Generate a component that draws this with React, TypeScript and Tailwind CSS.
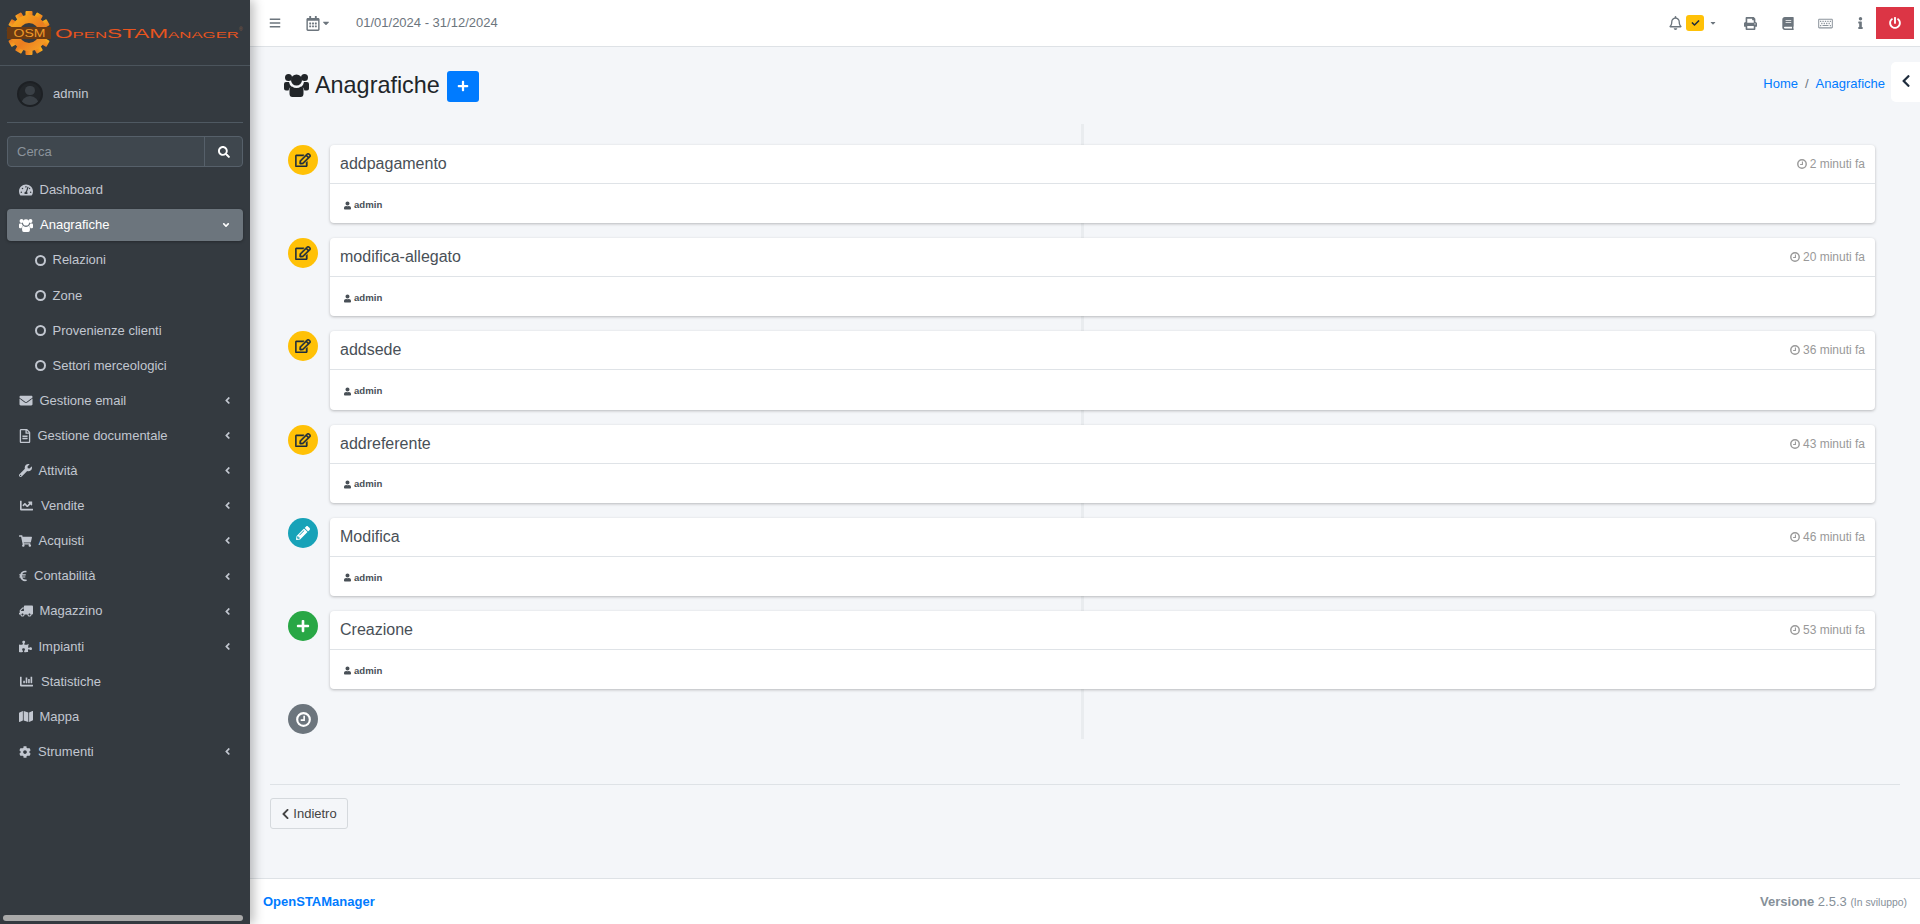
import type { ReactNode } from 'react';
import {
  FaAngleDown,
  FaAngleLeft,
  FaBars,
  FaBook,
  FaCaretDown,
  FaChartBar,
  FaChartLine,
  FaCheck,
  FaChevronLeft,
  FaCog,
  FaEnvelope,
  FaEuroSign,
  FaInfo,
  FaMap,
  FaPencilAlt,
  FaPlus,
  FaPowerOff,
  FaPrint,
  FaPuzzlePiece,
  FaRegBell,
  FaRegCalendarAlt,
  FaRegEdit,
  FaRegFileAlt,
  FaRegKeyboard,
  FaSearch,
  FaShoppingCart,
  FaTachometerAlt,
  FaTruck,
  FaUser,
  FaWrench,
} from 'react-icons/fa';

// Font Awesome 4 look: the "users" glyph is taller than the one in the package
function UsersIcon({ className }: { className: string }) {
  return (
    <svg viewBox="0 0 25 23" fill="currentColor" className={className}>
      <circle cx="4.5" cy="3.5" r="3.5" />
      <circle cx="20.5" cy="3.5" r="3.5" />
      <circle cx="12.5" cy="6" r="5.5" />
      <path d="M0 10q0-2 2-2h3q.5 3 2.5 4.5q-2.5 1-3 4H2q-2 0-2-2z" />
      <path d="M25 10q0-2-2-2h-3q-.5 3-2.5 4.5q2.5 1 3 4H23q2 0 2-2z" />
      <path d="M8 12.5q2 1.5 4.5 1.5t4.5-1.5q2.5 0 2.5 3v4q0 3.5-3 3.5H8.5q-3 0-3-3.5v-4q0-3 2.5-3z" />
    </svg>
  );
}

function ClockIcon({ className }: { className: string }) {
  return (
    <svg viewBox="0 0 14 14" fill="none" stroke="currentColor" className={className}>
      <circle cx="7" cy="7" r="5.9" strokeWidth="2" />
      <path d="M7.6 3.5v4.1H4.4" strokeWidth="1.5" />
    </svg>
  );
}

interface NavItem {
  label: string;
  icon: ReactNode;
  slot: string;
  arrow?: boolean;
}

const navBefore: NavItem[] = [
  { label: 'Dashboard', icon: <FaTachometerAlt className="w-[14px] h-[14px]" />, slot: 'w-[20.5px]' },
];

const subItems = ['Relazioni', 'Zone', 'Provenienze clienti', 'Settori merceologici'];

const navAfter: NavItem[] = [
  { label: 'Gestione email', icon: <FaEnvelope className="w-[14px] h-[13px]" />, slot: 'w-[20.5px]', arrow: true },
  { label: 'Gestione documentale', icon: <FaRegFileAlt className="w-[12px] h-[14px]" />, slot: 'w-[18.5px]', arrow: true },
  { label: 'Attività', icon: <FaWrench className="w-[13px] h-[13px]" />, slot: 'w-[19.5px]', arrow: true },
  { label: 'Vendite', icon: <FaChartLine className="w-[15px] h-[13px]" />, slot: 'w-[22px]', arrow: true },
  { label: 'Acquisti', icon: <FaShoppingCart className="w-[13px] h-[12px]" />, slot: 'w-[19.5px]', arrow: true },
  { label: 'Contabilità', icon: <FaEuroSign className="w-[8px] h-[12px]" />, slot: 'w-[15px]', arrow: true },
  { label: 'Magazzino', icon: <FaTruck className="w-[14px] h-[12px] -scale-x-100" />, slot: 'w-[20.5px]', arrow: true },
  { label: 'Impianti', icon: <FaPuzzlePiece className="w-[13px] h-[13px]" />, slot: 'w-[19.5px]', arrow: true },
  { label: 'Statistiche', icon: <FaChartBar className="w-[15px] h-[13px]" />, slot: 'w-[22px]' },
  { label: 'Mappa', icon: <FaMap className="w-[14px] h-[13px]" />, slot: 'w-[20.5px]' },
  { label: 'Strumenti', icon: <FaCog className="w-[12px] h-[12px]" />, slot: 'w-[19px]', arrow: true },
];

interface TimelineItem {
  title: string;
  time: string;
  color: string;
  icon: ReactNode;
}

const editIcon = <FaRegEdit className="w-[16px] h-[14px]" stroke="currentColor" strokeWidth={16} />;

const timeline: TimelineItem[] = [
  { title: 'addpagamento', time: '2 minuti fa', color: 'bg-[#ffc107] text-[#1f2d3d]', icon: editIcon },
  { title: 'modifica-allegato', time: '20 minuti fa', color: 'bg-[#ffc107] text-[#1f2d3d]', icon: editIcon },
  { title: 'addsede', time: '36 minuti fa', color: 'bg-[#ffc107] text-[#1f2d3d]', icon: editIcon },
  { title: 'addreferente', time: '43 minuti fa', color: 'bg-[#ffc107] text-[#1f2d3d]', icon: editIcon },
  { title: 'Modifica', time: '46 minuti fa', color: 'bg-[#17a2b8] text-white', icon: <FaPencilAlt className="w-[14px] h-[14px]" /> },
  { title: 'Creazione', time: '53 minuti fa', color: 'bg-[#28a745] text-white', icon: <FaPlus className="w-[14px] h-[14px]" /> },
];

function Logo() {
  return (
    <svg width="244" height="60" viewBox="0 0 244 60" className="block">
      <defs>
        <linearGradient id="gear" x1="0" y1="0" x2="1" y2="1">
          <stop offset="0" stopColor="#f9b31c" />
          <stop offset="0.55" stopColor="#ec7d1f" />
          <stop offset="1" stopColor="#f7a927" />
        </linearGradient>
      </defs>
      <g transform="translate(29 33)">
        {[0, 30, 60, 90, 120, 150].map((a) => (
          <rect key={a} x="-3.5" y="-22" width="7" height="44" rx="1" fill="url(#gear)" transform={`rotate(${a})`} />
        ))}
        <circle r="18" fill="url(#gear)" />
        <circle r="10" fill="#343a40" />
        <rect x="-22" y="-6" width="44" height="12" fill="#6b3a12" />
      </g>
      <text x="13.5" y="37" fontFamily="Liberation Sans" fontSize="11" textLength="32" lengthAdjust="spacingAndGlyphs" fill="#f09a2a">
        OSM
      </text>
      <text x="55" y="37.5" fontFamily="Liberation Sans" fontSize="12.5" textLength="184" lengthAdjust="spacingAndGlyphs" fill="#e8541e">
        O<tspan fontSize="9.3">PEN</tspan>STAM<tspan fontSize="9.3">ANAGER</tspan>
      </text>
      <text x="239" y="31" fontFamily="Liberation Sans" fontSize="5" fill="#8a5a44">®</text>
    </svg>
  );
}

function NavRow({ item }: { item: NavItem }) {
  return (
    <div className="h-[32.1px] flex items-center pl-[12px] pr-[12px] text-[#c2c7d0]">
      <span className={`${item.slot} shrink-0 flex items-center`}>{item.icon}</span>
      <span>{item.label}</span>
      {item.arrow && <FaAngleLeft className="ml-auto w-[7px] h-[11px]" />}
    </div>
  );
}

function Sidebar() {
  return (
    <aside className="relative w-[250px] h-full shrink-0 bg-[#343a40] shadow-[4px_0_10px_rgba(0,0,0,0.25)] z-10">
      <div className="h-[66px] border-b border-[#4b545c] overflow-hidden">
        <Logo />
      </div>
      <div className="mx-[7px] h-[57px] border-b border-[#4f5962] flex items-center pl-[10px]">
        <div className="w-[26px] h-[26px] rounded-full bg-[#22262a] border-2 border-[#1d2024] overflow-hidden flex flex-col items-center shrink-0">
          <div className="w-[10px] h-[10px] rounded-full bg-[#3a4046] mt-[3px]" />
          <div className="w-[18px] h-[10px] rounded-t-full bg-[#3a4046] mt-[1px]" />
        </div>
        <span className="ml-[10px] text-[#c2c7d0]">admin</span>
      </div>
      <div className="mx-[7px] mt-[13px] h-[31px] flex border border-[#56606a] rounded-[4px] bg-[#3f474e]">
        <div className="flex-1 flex items-center pl-[9px] text-[#8c949c]">Cerca</div>
        <div className="w-[38px] border-l border-[#56606a] flex items-center justify-center text-white">
          <FaSearch className="w-[12px] h-[12px]" />
        </div>
      </div>
      <nav className="mt-[7px] px-[7px] flex flex-col gap-[3px]">
        {navBefore.map((item) => (
          <NavRow key={item.label} item={item} />
        ))}
        <div className="h-[32.1px] flex items-center px-[12px] bg-[#6c757d] text-white rounded-[4px] shadow-[0_1px_3px_rgba(0,0,0,0.3)]">
          <span className="w-[21px] shrink-0 flex items-center">
            <UsersIcon className="w-[14px] h-[13px]" />
          </span>
          <span>Anagrafiche</span>
          <FaAngleDown className="ml-auto w-[10px] h-[10px]" />
        </div>
        {subItems.map((label) => (
          <div key={label} className="h-[32.1px] flex items-center pl-[27.5px] text-[#c2c7d0]">
            <span className="w-[11px] h-[11px] rounded-full border-2 border-[#c2c7d0] mr-[7px] shrink-0" />
            <span>{label}</span>
          </div>
        ))}
        {navAfter.map((item) => (
          <NavRow key={item.label} item={item} />
        ))}
      </nav>
      <div className="absolute left-[3px] bottom-[3px] w-[240px] h-[6px] rounded-full bg-[#a9a9a9]" />
    </aside>
  );
}

function Topbar() {
  return (
    <header className="h-[47px] shrink-0 bg-white border-b border-[#dee2e6] flex items-center text-[#6c757d]">
      <FaBars className="ml-[19px] w-[12px] h-[12px]" />
      <FaRegCalendarAlt className="ml-[25px] w-[14px] h-[15px]" />
      <FaCaretDown className="ml-[1px] w-[10px] h-[10px]" />
      <span className="ml-[25px]">01/01/2024 - 31/12/2024</span>
      <div className="ml-auto flex items-center h-full pr-[6px]">
        <FaRegBell className="w-[13px] h-[14px]" />
        <span className="ml-[4px] w-[18px] h-[16px] rounded-[3px] bg-[#ffc107] text-[#1f2d3d] flex items-center justify-center">
          <FaCheck className="w-[9px] h-[8px]" />
        </span>
        <FaCaretDown className="ml-[5px] w-[8px] h-[8px]" />
        <FaPrint className="ml-[27px] w-[13px] h-[13px]" />
        <FaBook className="ml-[25px] w-[12px] h-[13px]" />
        <FaRegKeyboard className="ml-[24px] w-[15px] h-[13px] text-[#8c949c]" />
        <FaInfo className="ml-[25px] w-[5px] h-[12px]" />
        <div className="ml-[13px] w-[38px] h-[32px] bg-[#dc3545] text-white flex items-center justify-center">
          <FaPowerOff className="w-[12px] h-[12px]" />
        </div>
      </div>
    </header>
  );
}

function TimelineCard({ item }: { item: TimelineItem }) {
  return (
    <div className="flex h-[78.2px] mb-[15px]">
      <div className={`ml-[18px] w-[30px] h-[30px] rounded-full ${item.color} flex items-center justify-center shrink-0 z-10`}>
        {item.icon}
      </div>
      <div className="relative ml-[12px] mr-[25px] flex-1 bg-white rounded-[4px] shadow-[0_1px_3px_rgba(0,0,0,0.25)]">
        <div className="h-[39px] border-b border-[#dfe3e7] flex items-center justify-between px-[10px]">
          <span className="text-[16px] text-[#495057]">{item.title}</span>
          <span className="flex items-center text-[12px] text-[#999999]">
            <ClockIcon className="w-[10px] h-[10px] mr-[3px]" />
            {item.time}
          </span>
        </div>
        <div className="flex items-center h-[39px] pt-[3px] pl-[14px] text-[9.6px] font-bold text-[#495057]">
          <FaUser className="w-[7px] h-[9px] mr-[3px]" />
          admin
        </div>
      </div>
    </div>
  );
}

export default function App() {
  return (
    <div className="w-[1920px] h-[924px] flex overflow-hidden bg-[#f4f6f9] text-[13px] font-['Liberation_Sans',Arial,sans-serif]">
      <Sidebar />
      <div className="flex-1 min-w-0 flex flex-col">
        <Topbar />
        <main className="relative flex-1 min-h-0 px-[20px]">
          <div className="h-[77px] flex items-center pl-[14px]">
            <UsersIcon className="w-[25px] h-[23px] text-[#212529]" />
            <h1 className="ml-[6px] text-[23.4px] text-[#212529] leading-none">Anagrafiche</h1>
            <div className="ml-[7px] w-[32px] h-[31px] rounded-[3px] bg-[#007bff] text-white flex items-center justify-center mt-[1px]">
              <FaPlus className="w-[12px] h-[12px]" />
            </div>
            <div className="ml-auto mr-[15px] -mt-[3px] flex items-center gap-[7px] text-[#007bff]">
              <span>Home</span>
              <span className="text-[#6c757d]">/</span>
              <span>Anagrafiche</span>
            </div>
          </div>
          <div className="relative pt-[21px] h-[661px]">
            <div className="absolute left-[811px] top-0 w-[3px] h-[615px] bg-[#e9ecef]" />
            <div className="relative">
              {timeline.map((item) => (
                <TimelineCard key={item.title} item={item} />
              ))}
              <div className="ml-[18px] w-[30px] h-[30px] rounded-full bg-[#6c757d] text-white flex items-center justify-center">
                <ClockIcon className="w-[15px] h-[15px]" />
              </div>
            </div>
          </div>
          <div className="-mt-[1px] border-t border-[#dee2e6] pt-[13px]">
            <div className="w-[78px] h-[31px] border border-[#d5d9dd] rounded-[3px] flex items-center justify-center text-[#444444]">
              <FaChevronLeft className="w-[9px] h-[12px] mr-[3px]" />
              Indietro
            </div>
          </div>
          <div className="absolute right-0 top-[15px] w-[29px] h-[40px] bg-white rounded-l-[5px] flex items-center justify-center text-[#1f2d3d]">
            <FaChevronLeft className="w-[10px] h-[14px] -mt-[2px]" />
          </div>
        </main>
        <footer className="h-[46px] shrink-0 bg-white border-t border-[#dee2e6] flex items-center justify-between pl-[13px] pr-[13px]">
          <span className="font-bold text-[#007bff]">OpenSTAManager</span>
          <span className="text-[#869099]">
            <b>Versione</b> 2.5.3 <span className="text-[10.4px]">(In sviluppo)</span>
          </span>
        </footer>
      </div>
    </div>
  );
}
